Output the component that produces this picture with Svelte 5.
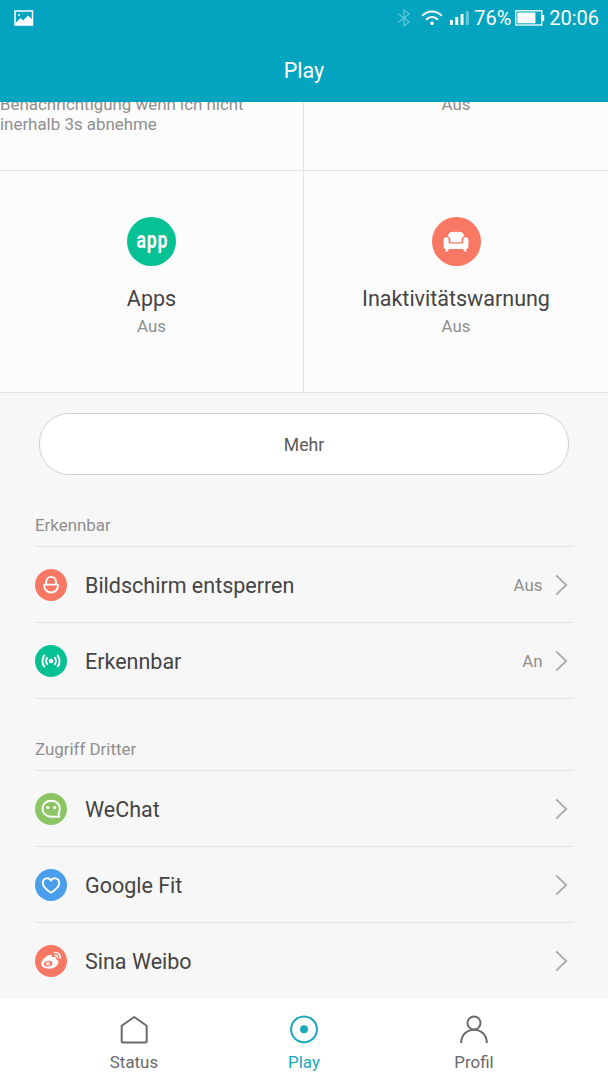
<script>
	let tiles = [
		{ id: 'apps', title: 'Apps', state: 'Aus', color: '#05c193' },
		{ id: 'sofa', title: 'Inaktivitätswarnung', state: 'Aus', color: '#f87864' }
	];

	let groups = [
		{
			title: 'Erkennbar',
			rows: [
				{ icon: 'lock', label: 'Bildschirm entsperren', value: 'Aus', color: '#f87864' },
				{ icon: 'signal', label: 'Erkennbar', value: 'An', color: '#05c193' }
			]
		},
		{
			title: 'Zugriff Dritter',
			rows: [
				{ icon: 'wechat', label: 'WeChat', value: '', color: '#8dc565' },
				{ icon: 'heart', label: 'Google Fit', value: '', color: '#4a9fec' },
				{ icon: 'weibo', label: 'Sina Weibo', value: '', color: '#f87864' }
			]
		}
	];

	let tabs = ['Status', 'Play', 'Profil'];
	let activeTab = $state('Play');
</script>

<div class="screen">
	<header>
		<div class="status-bar">
			<svg class="picture" width="20" height="17" viewBox="0 0 20 17">
				<rect x="1" y="1" width="17.5" height="14" fill="none" stroke="#fff" stroke-width="1.5" />
				<path d="M2 14 L2 12.5 L6.5 8 L9 10.5 L14 5.5 L18 9.5 V15 H2z" fill="#fff" />
				<circle cx="5" cy="5" r="1" fill="#fff" />
			</svg>
			<div class="indicators">
				<svg width="14" height="18" viewBox="0 0 14 18" fill="none" stroke="#5cc6d8" stroke-width="1.3">
					<path d="M1 4.5 L12.2 13 L7 17 V1 L12.2 5 L1 13.5" />
				</svg>
				<svg class="wifi" width="22" height="16" viewBox="0 0 22 16" fill="none" stroke="#fff" stroke-width="2">
					<path d="M1.2 5.8 C6.5 0 15.5 0 20.8 5.8" />
					<path d="M5 9.7 C8.5 6.2 13.5 6.2 17 9.7" />
					<circle cx="11" cy="13.4" r="1.8" fill="#fff" stroke="none" />
				</svg>
				<svg class="bars" width="19" height="16" viewBox="0 0 19 16" fill="#fff">
					<rect x="0" y="10" width="2.9" height="5" />
					<rect x="5.3" y="7" width="2.9" height="8" />
					<rect x="10.6" y="4" width="2.9" height="11" />
					<rect x="15.9" y="1" width="2.9" height="14" opacity=".4" />
				</svg>
				<span class="percent">76%</span>
				<svg class="battery" width="30" height="16" viewBox="0 0 30 16">
					<rect x=".8" y=".8" width="26" height="14.2" fill="none" stroke="#fff" stroke-width="1.3" />
					<rect x="2.4" y="2.5" width="18" height="10.8" fill="#fff" />
					<rect x="27" y="5" width="2.2" height="6" fill="#fff" />
				</svg>
				<span class="clock">20:06</span>
			</div>
		</div>
		<h1>Play</h1>
	</header>

	<main>
		<div class="grid">
			<div class="tile cut">
				<p>Benachrichtigung wenn ich nicht<br />inerhalb 3s abnehme</p>
			</div>
			<div class="tile cut center">
				<p>Aus</p>
			</div>
			{#each tiles as tile (tile.id)}
				<div class="tile">
					<div class="tile-icon" style="background: {tile.color}">
						{#if tile.id === 'apps'}
							<span class="app-word">app</span>
						{:else}
							<svg width="26" height="22" viewBox="0 0 26 22" fill="#fff">
								<path d="M5 5.2 Q5 1.2 9 1 Q13 .4 17 1 Q21 1.2 21 5.2 Q18.6 6.2 18.6 8.5 V11.3 H7.4 V8.5 Q7.4 6.2 5 5.2z" />
								<path d="M3 6.3 Q5.6 6.3 5.7 9 V12.6 H20.3 V9 Q20.4 6.3 23 6.3 Q25.6 6.5 25.5 9.5 L25.3 16 Q25.3 18 23.3 18 H22.6 L24 20 L22.2 21 L19.8 18 H6.2 L3.8 21 L2 20 L3.4 18 H2.7 Q.7 18 .7 16 L.5 9.5 Q.4 6.5 3 6.3z" />
							</svg>
						{/if}
					</div>
					<h2>{tile.title}</h2>
					<p>{tile.state}</p>
				</div>
			{/each}
		</div>

		<button class="more">Mehr</button>

		{#each groups as group (group.title)}
			<section>
				<h3>{group.title}</h3>
				{#each group.rows as row (row.label)}
					<div class="row">
						<div class="row-icon" style="background: {row.color}">
							<svg width="32" height="32" viewBox="0 0 32 32" fill="none" stroke="#fff" stroke-width="1.9">
								{#if row.icon === 'lock'}
									<path d="M9.2 15.6 H23 V16.6 A6.9 6.9 0 0 1 9.2 16.6z" stroke-linejoin="round" />
									<path d="M11.2 15.6 V12.8 A4.9 4.9 0 0 1 21 12.8 V15.6" />
								{:else if row.icon === 'signal'}
									<circle cx="16" cy="16" r="2.3" fill="#fff" stroke="none" />
									<path d="M12.6 12.3 A5.2 5.2 0 0 0 12.6 19.7 M19.4 12.3 A5.2 5.2 0 0 1 19.4 19.7" />
									<path d="M9.8 10 A8.7 8.7 0 0 0 9.8 22 M22.2 10 A8.7 8.7 0 0 1 22.2 22" />
								{:else if row.icon === 'wechat'}
									<path d="M16.2 7.8 C11.2 7.8 7.5 11.1 7.5 15.7 C7.5 20.3 11.2 23.7 16.2 23.7 H24.4 L23.4 20.5 C24.4 19.2 24.9 17.5 24.9 15.7 C24.9 11.1 21.1 7.8 16.2 7.8z" stroke-linejoin="round" />
									<circle cx="12.8" cy="14.6" r="1.6" fill="#fff" stroke="none" />
									<circle cx="19.6" cy="14.6" r="1.6" fill="#fff" stroke="none" />
								{:else if row.icon === 'heart'}
									<path d="M16 11.6 C14.2 7.8 7.8 8.5 7.8 14 C7.8 17.8 11.5 21 16 23.8 C20.5 21 24.2 17.8 24.2 14 C24.2 8.5 17.8 7.8 16 11.6z" stroke-linejoin="round" />
								{:else}
									<path d="M14.3 10 C16.5 9 17.6 10.2 17 12.4 C20 11.4 21.8 12 21 14.3 C23 15 23.8 16.2 23.2 18 C22.2 21.5 18.6 23.7 14.2 23.7 C9.5 23.7 6.2 21.8 6.2 18.8 C6.2 15.5 10.6 11.2 14.3 10z" fill="#fff" stroke="none" />
									<ellipse cx="13.2" cy="18.6" rx="4.2" ry="2.9" fill={row.color} stroke="none" transform="rotate(-8 13.2 18.6)" />
									<circle cx="13" cy="18.6" r="1.9" fill="#fff" stroke="none" />
									<circle cx="13" cy="18.6" r=".7" fill={row.color} stroke="none" />
									<path d="M18.8 7.6 C22.8 6.5 26.3 9.8 25 13.8 M19.4 10.4 C21.5 9.8 23.1 11.3 22.5 13.2" stroke-width="1.4" />
								{/if}
							</svg>
						</div>
						<span class="label">{row.label}</span>
						<span class="value">{row.value}</span>
						<svg class="chevron" width="14" height="22" viewBox="0 0 14 22" fill="none" stroke="#acacac" stroke-width="1.9">
							<path d="M1.2 1.4 L11.2 11 L1.2 20.6" />
						</svg>
					</div>
				{/each}
			</section>
		{/each}
	</main>

	<nav>
		{#each tabs as tab (tab)}
			<button class="tab" class:active={tab === activeTab} onclick={() => (activeTab = tab)}>
				<svg width="30" height="30" viewBox="0 0 30 30" fill="none" stroke="currentColor" stroke-width="2">
					{#if tab === 'Status'}
						<path d="M15.2 2 L27.7 10.8 V26 Q27.7 27.5 26.2 27.5 H4.2 Q2.7 27.5 2.7 26 V10.8z" stroke-linejoin="round" />
					{:else if tab === 'Play'}
						<circle cx="15" cy="14.3" r="12.9" />
						<circle cx="15" cy="14.3" r="4" fill="currentColor" stroke="none" />
					{:else}
						<circle cx="15" cy="8" r="6.5" />
						<path d="M2.2 28 C2.2 10.2 27.8 10.2 27.8 28" />
					{/if}
				</svg>
				<span>{tab}</span>
			</button>
		{/each}
	</nav>
</div>

<style>
	:global(body) {
		margin: 0;
	}

	.screen {
		width: 608px;
		height: 1080px;
		display: flex;
		flex-direction: column;
		overflow: hidden;
		background: #f7f7f7;
		font-family: Roboto, sans-serif;
	}

	h1, h2, h3, p {
		margin: 0;
		font-weight: 400;
	}

	svg {
		display: block;
		flex: none;
	}

	header {
		flex: none;
		height: 102px;
		background: #03a4c0;
		color: #fff;
	}

	.status-bar {
		height: 36px;
		display: flex;
		justify-content: space-between;
		padding: 0 9px 0 14px;
		align-items: center;
	}

	.indicators {
		display: flex;
		align-items: center;
		font-size: 20px;
	}

	.wifi {
		margin-left: 10px;
	}

	.bars {
		margin-left: 7px;
	}

	.percent {
		margin-left: 5px;
		width: 41px;
	}

	.clock {
		margin-left: 4px;
	}

	h1 {
		height: 66px;
		line-height: 69px;
		font-size: 21.5px;
		text-align: center;
	}

	main {
		flex: none;
		height: 897px;
		overflow: hidden;
	}

	.grid {
		display: grid;
		grid-template-columns: 304px 304px;
		grid-template-rows: 69px 222px;
		background: #fcfcfc;
	}

	.tile {
		box-sizing: border-box;
		border-bottom: 1px solid #e3e3e3;
		display: flex;
		flex-direction: column;
		align-items: center;
		padding-top: 46px;
		color: #8f8f8f;
		font-size: 16.9px;
	}

	.tile:nth-child(odd) {
		border-right: 1px solid #e3e3e3;
	}

	/* tiles scrolled half way under the header */
	.cut {
		align-items: flex-start;
		justify-content: flex-end;
		padding: 0 0 36px;
		line-height: 20px;
		overflow: hidden;
	}

	.cut.center {
		align-items: center;
		padding-bottom: 56px;
	}

	.tile-icon {
		width: 49px;
		height: 49px;
		border-radius: 50%;
		display: flex;
		align-items: center;
		justify-content: center;
	}

	.app-word {
		color: #fff;
		font-size: 24px;
		font-weight: 700;
		letter-spacing: 1px;
		margin-right: -1px;
		line-height: 46px;
		height: 49px;
		transform: scaleX(.74);
	}

	h2 {
		margin-top: 19px;
		line-height: 28px;
		font-size: 21.5px;
		color: #444;
	}

	.tile:not(.cut) p {
		margin-top: 3px;
		line-height: 20px;
	}

	.more {
		display: block;
		box-sizing: border-box;
		width: 530px;
		height: 62px;
		margin: 20px auto 0;
		padding: 2px 0 0;
		border: 1px solid #d2d2d2;
		border-radius: 30px;
		background: #fff;
		font: 17.6px Roboto, sans-serif;
		color: #5a5a5a;
	}

	section {
		margin: 0 34px 0 35px;
	}

	h3 {
		box-sizing: border-box;
		height: 72px;
		padding-top: 39px;
		line-height: 22px;
		font-size: 16.9px;
		color: #8f8f8f;
		border-bottom: 1px solid #e3e3e3;
	}

	.row {
		box-sizing: border-box;
		height: 76px;
		display: flex;
		align-items: center;
		border-bottom: 1px solid #e3e3e3;
	}

	section:last-child .row:last-child {
		border-bottom-color: transparent;
	}

	.row-icon {
		width: 32px;
		height: 32px;
		border-radius: 50%;
	}

	.label {
		flex: 1;
		margin-left: 18px;
		padding-top: 2px;
		font-size: 21.5px;
		color: #444;
	}

	.value {
		padding-top: 1px;
		font-size: 16.9px;
		color: #8f8f8f;
	}

	.chevron {
		margin: 0 5px 0 12.5px;
	}

	nav {
		flex: 1;
		display: flex;
		justify-content: center;
		background: #fff;
	}

	.tab {
		width: 170px;
		padding: 16px 0 0;
		border: none;
		background: none;
		display: flex;
		flex-direction: column;
		align-items: center;
		font: 16.9px Roboto, sans-serif;
		color: #6a6a6a;
	}

	.tab span {
		margin-top: 7px;
	}

	.tab.active {
		color: #1ba8bb;
	}
</style>
